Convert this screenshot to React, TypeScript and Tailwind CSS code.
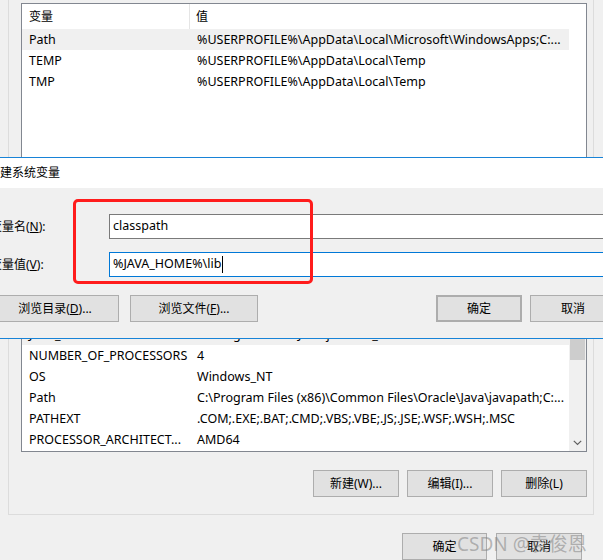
import React from 'react';

type Item = { name: string; value: string; selected?: boolean };

const userVars: Item[] = [
  { name: 'Path', value: '%USERPROFILE%\\AppData\\Local\\Microsoft\\WindowsApps;C:...', selected: true },
  { name: 'TEMP', value: '%USERPROFILE%\\AppData\\Local\\Temp' },
  { name: 'TMP', value: '%USERPROFILE%\\AppData\\Local\\Temp' },
];

const sysVars: Item[] = [
  { name: 'JAVA_HOME', value: 'C:\\Program Files\\Java\\jdk1.8.0_201', selected: true },
  { name: 'NUMBER_OF_PROCESSORS', value: '4' },
  { name: 'OS', value: 'Windows_NT' },
  { name: 'Path', value: 'C:\\Program Files (x86)\\Common Files\\Oracle\\Java\\javapath;C:...' },
  { name: 'PATHEXT', value: '.COM;.EXE;.BAT;.CMD;.VBS;.VBE;.JS;.JSE;.WSF;.WSH;.MSC' },
  { name: 'PROCESSOR_ARCHITECT...', value: 'AMD64' },
];

// Une ligne de la liste (nom + valeur)
const Row = ({ item }: { item: Item }) => (
  <div
    className={`flex h-[21px] items-center whitespace-nowrap pt-px text-[12.5px] ${item.selected ? 'bg-[#f0f0f0]' : ''}`}
  >
    <div className="w-[168px] shrink-0 overflow-hidden pl-[7px]">{item.name}</div>
    <div className="flex-1 overflow-hidden pl-[7px]">{item.value}</div>
  </div>
);

const Header = () => (
  <div className="flex h-[25px] items-center bg-white">
    <div className="flex h-full w-[168px] shrink-0 items-center border-r border-[#e5e5e5] pl-[7px]">变量</div>
    <div className="flex-1 pl-[6px]">值</div>
  </div>
);

const Button = ({ children, className = '' }: { children: React.ReactNode; className?: string }) => (
  <div
    className={`flex h-[27px] items-center justify-center border border-[#adadad] bg-[#e1e1e1] whitespace-nowrap ${className}`}
  >
    {children}
  </div>
);

export default function App() {
  return (
    <div className="relative h-[560px] w-[603px] overflow-hidden bg-[#f0f0f0] font-['Noto_Sans','Noto_Sans_CJK_SC',sans-serif] text-[12px] text-black">
      {/* Fenêtre principale : variables d'environnement */}
      <div className="ml-[8px] h-[515px] w-[586px] border-x border-b border-[#dcdcdc] pl-[12px] pt-[3px]">
        {/* Liste des variables utilisateur */}
        <div className="flex h-[190px] w-[566px] border border-[#828790] bg-white">
          <div className="w-[547px]">
            <Header />
            {userVars.map((v) => (
              <Row key={v.name} item={v} />
            ))}
          </div>
        </div>

        {/* Liste des variables système */}
        <div className="mt-[105px] flex h-[154px] w-[566px] border border-[#828790] bg-white">
          <div className="w-[547px] overflow-hidden">
            <Header />
            {sysVars.map((v) => (
              <Row key={v.name} item={v} />
            ))}
          </div>
          <div className="flex w-[17px] flex-col bg-[#f0f0f0]">
            <div className="h-[17px]" />
            <div className="h-[14px]" />
            <div className="mx-[1px] h-[30px] bg-[#cdcdcd]" />
            <div className="flex-1" />
            <div className="flex h-[17px] items-center justify-center">
              <svg width="9" height="6" viewBox="0 0 9 6" fill="none" stroke="#606060" strokeWidth="1.2">
                <path d="M0.8 0.8 L4.5 4.5 L8.2 0.8" />
              </svg>
            </div>
          </div>
        </div>

        <div className="mt-[18px] flex w-[566px] justify-end gap-[8px]">
          <Button className="w-[86px]">新建(W)...</Button>
          <Button className="w-[86px]">编辑(I)...</Button>
          <Button className="w-[86px]">删除(L)</Button>
        </div>
      </div>

      <div className="mt-[18px] flex justify-end gap-[9px] pr-[21px]">
        <Button className="w-[85px]">确定</Button>
        <Button className="w-[86px]">取消</Button>
      </div>

      {/* Boîte de dialogue : nouvelle variable système */}
      <div className="absolute left-[-22px] top-[157px] flex h-[182px] w-[651px] flex-col border border-[#1883d7] bg-[#f0f0f0]">
        <div className="flex h-[30px] items-center bg-white pl-[9px]">新建系统变量</div>
        <div className="flex flex-1 flex-col pl-[11px] pr-[12px] pt-[26px]">
          <div className="flex items-center">
            <div className="w-[119px] shrink-0">
              变量名(<span className="underline">N</span>):
            </div>
            <div className="flex h-[25px] flex-1 items-center border border-[#7a7a7a] bg-white pl-[3px] text-[12.5px]">
              classpath
            </div>
          </div>
          <div className="mt-[13px] flex items-center">
            <div className="w-[119px] shrink-0">
              变量值(<span className="underline">V</span>):
            </div>
            <div className="flex h-[25px] flex-1 items-center border border-[#0078d7] bg-white pl-[3px] text-[12.5px]">
              %JAVA_HOME%\lib
              <span className="ml-[1px] inline-block h-[17px] w-[1px] bg-black" />
            </div>
          </div>
          <div className="mt-[18px] flex items-center">
            <Button className="ml-[1px] w-[128px]">
              浏览目录(<span className="underline">D</span>)...
            </Button>
            <Button className="ml-[11px] w-[128px]">
              浏览文件(<span className="underline">F</span>)...
            </Button>
            <div className="flex-1" />
            <Button className="w-[86px] border-2 border-[#0078d7]">确定</Button>
            <Button className="ml-[8px] w-[86px]">取消</Button>
          </div>
        </div>
      </div>

      {/* Annotation rouge */}
      <div className="absolute left-[73px] top-[199px] h-[85px] w-[240px] rounded-[5px] border-[3px] border-[#ff1c1c]" />

      {/* Filigrane */}
      <div className="absolute left-[457px] top-[530px] whitespace-nowrap text-[19px] text-[rgba(130,130,130,0.55)]">
        CSDN @袁俊恩
      </div>
    </div>
  );
}
